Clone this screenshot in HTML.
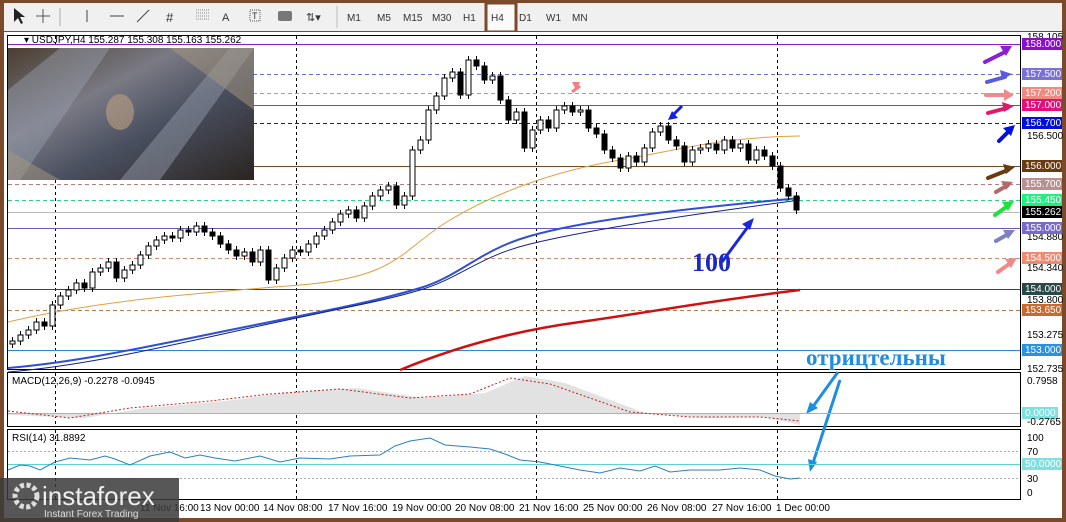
<!DOCTYPE html>
<html><head><meta charset="utf-8"><style>
html,body{margin:0;padding:0;width:1066px;height:522px;overflow:hidden;background:#7b4a2b;font-family:"Liberation Sans",sans-serif}
svg{display:block}
.w{fill:#fff;stroke:#000}.b{fill:#000;stroke:#000}
</style></head><body>
<svg width="1066" height="522" xmlns="http://www.w3.org/2000/svg" font-family="Liberation Sans, sans-serif">
<rect x="0" y="0" width="1066" height="522" fill="#7b4a2b"/>
<rect x="4" y="3" width="1058" height="28" fill="#f0f0f0"/>
<rect x="486" y="3" width="30" height="29" fill="#fafafa" stroke="#7b4a2b" stroke-width="3"/>
<g font-size="10" fill="#333">
<path d="M14 8l0 14 4-4 3 6 2-1-3-6 5 0z" fill="#222"/>
<path d="M43 9v14M36 16h14" stroke="#555"/>
<path d="M60 8v18" stroke="#aaa"/>
<path d="M87 10v12" stroke="#444"/>
<path d="M110 16h14" stroke="#444"/>
<path d="M137 22l12-12" stroke="#444"/>
<text x="166" y="22" font-size="13">#</text>
<path d="M196 10h14M196 13h14M196 16h14M196 19h14" stroke="#888" stroke-dasharray="1 1"/>
<text x="222" y="21" font-size="11">A</text>
<rect x="250" y="10" width="10" height="11" fill="none" stroke="#555" stroke-dasharray="1 1"/><text x="252" y="19" font-size="9">T</text>
<rect x="278" y="11" width="14" height="10" rx="2" fill="#777"/>
<text x="306" y="21" font-size="11">⇅▾</text>
<path d="M337 6v22" stroke="#bbb"/>
<text x="347" y="21">M1</text><text x="377" y="21">M5</text><text x="403" y="21">M15</text><text x="432" y="21">M30</text><text x="463" y="21">H1</text><text x="491" y="21">H4</text><text x="519" y="21">D1</text><text x="546" y="21">W1</text><text x="572" y="21">MN</text>
</g>
<rect x="4" y="32" width="1058" height="486" fill="#fff"/>
<rect x="7.5" y="35.5" width="1013" height="334" fill="none" stroke="#000"/>
<rect x="7.5" y="372.5" width="1013" height="54" fill="none" stroke="#000"/>
<rect x="7.5" y="429.5" width="1013" height="70" fill="none" stroke="#000"/>
<g stroke="#000" stroke-dasharray="3 3">
<path d="M55.5 36v334M296.5 36v334M536.5 36v334M777.5 36v334M55.5 373v54M296.5 373v54M536.5 373v54M777.5 373v54M55.5 430v70M296.5 430v70M536.5 430v70M777.5 430v70"/>
</g>
<g stroke-width="1">
<path d="M8 44.5h1012" stroke="#8b1fc0"/>
<path d="M8 74.5h1012" stroke="#6a6ae0" stroke-dasharray="4 3"/>
<path d="M8 93.5h1012" stroke="#e08a7a" stroke-dasharray="4 3"/>
<path d="M8 105.5h1012" stroke="#d0208a"/>
<path d="M8 123.5h1012" stroke="#102080" stroke-dasharray="4 3"/>
<path d="M8 166.5h1012" stroke="#7a4a20"/>
<path d="M8 184.5h1012" stroke="#b08080" stroke-dasharray="4 3"/>
<path d="M8 200.5h1012" stroke="#30d080" stroke-dasharray="4 3"/>
<path d="M8 212.5h1012" stroke="#bbb"/>
<path d="M8 228.5h1012" stroke="#6a5ab0"/>
<path d="M8 258.5h1012" stroke="#d08a70" stroke-dasharray="4 3"/>
<path d="M8 289.5h1012" stroke="#2a4a4a"/>
<path d="M8 310.5h1012" stroke="#c07a50" stroke-dasharray="4 3"/>
<path d="M8 350.5h1012" stroke="#2a8ad0"/>
</g>
<path d="M8 322 C100 300,200 293,300 285 S400 250,450 220 S560 170,620 160 S720 137,800 136" fill="none" stroke="#e0a040" stroke-width="1"/>
<path d="M8 368 C80 362,150 346,250 326 S380 300,420 288 S480 250,530 236 S650 212,800 198" fill="none" stroke="#3050d0" stroke-width="2"/>
<path d="M8 372 C80 366,150 350,250 328 S380 302,420 290 S480 256,530 244 S650 220,800 200" fill="none" stroke="#102090" stroke-width="1"/>
<path d="M400 370 C460 345,520 330,580 322 S700 302,800 290" fill="none" stroke="#d01010" stroke-width="2.5"/>
<!-- candles -->
<path stroke="#000" d="M12.5 337v11M20.5 331v14M28.5 326v13M36.5 318v16M44.5 318v12M52.5 301v29M60.5 292v17M68.5 286v14M76.5 279v15M84.5 279v13M92.5 268v24M100.5 264v12M108.5 258v14M116.5 258v24M124.5 266v16M132.5 261v13M140.5 251v18M148.5 242v17M156.5 236v14M164.5 232v12M172.5 232v10M180.5 226v16M188.5 226v10M196.5 222v14M204.5 222v14M212.5 228v12M220.5 232v16M228.5 240v14M236.5 246v14M244.5 248v12M252.5 248v18M260.5 246v20M268.5 246v38M276.5 264v20M284.5 254v18M292.5 246v16M300.5 246v10M308.5 240v16M316.5 232v16M324.5 226v14M332.5 218v16M340.5 210v16M348.5 206v12M356.5 206v16M364.5 202v20M372.5 192v18M380.5 186v14M388.5 182v12M396.5 182v27M404.5 192v17M412.5 146v54M420.5 136v18M428.5 106v38M436.5 92v22M444.5 74v26M452.5 68v14M460.5 68v31M468.5 56v43M476.5 56v14M484.5 62v22M492.5 72v12M500.5 72v32M508.5 96v28M516.5 108v16M524.5 108v44M532.5 126v26M540.5 116v18M548.5 116v16M556.5 106v26M564.5 102v12M572.5 102v14M580.5 106v10M588.5 106v26M596.5 124v14M604.5 130v24M612.5 146v16M620.5 154v18M628.5 152v20M636.5 152v14M644.5 144v22M652.5 128v24M660.5 122v14M668.5 122v22M676.5 136v14M684.5 142v24M692.5 146v20M700.5 144v10M708.5 140v12M716.5 140v14M724.5 136v18M732.5 136v16M740.5 140v12M748.5 140v24M756.5 146v18M764.5 146v14M772.5 152v18M780.5 162v30M788.5 184v16M796.5 192v22"/>
<g shape-rendering="crispEdges">
<rect class="w" x="10" y="341" width="5" height="3"/><rect class="w" x="18" y="335" width="5" height="6"/><rect class="w" x="26" y="330" width="5" height="5"/><rect class="w" x="34" y="322" width="5" height="8"/><rect class="b" x="42" y="322" width="5" height="4"/><rect class="w" x="50" y="305" width="5" height="21"/><rect class="w" x="58" y="296" width="5" height="9"/><rect class="w" x="66" y="290" width="5" height="6"/><rect class="w" x="74" y="283" width="5" height="7"/><rect class="b" x="82" y="283" width="5" height="5"/><rect class="w" x="90" y="272" width="5" height="16"/><rect class="w" x="98" y="268" width="5" height="4"/><rect class="w" x="106" y="262" width="5" height="6"/><rect class="b" x="114" y="262" width="5" height="16"/><rect class="w" x="122" y="270" width="5" height="8"/><rect class="w" x="130" y="265" width="5" height="5"/><rect class="w" x="138" y="255" width="5" height="10"/><rect class="w" x="146" y="246" width="5" height="9"/><rect class="w" x="154" y="240" width="5" height="6"/><rect class="w" x="162" y="236" width="5" height="4"/><rect class="b" x="170" y="236" width="5" height="2"/><rect class="w" x="178" y="230" width="5" height="8"/><rect class="b" x="186" y="230" width="5" height="2"/><rect class="w" x="194" y="226" width="5" height="6"/><rect class="b" x="202" y="226" width="5" height="6"/><rect class="b" x="210" y="232" width="5" height="4"/><rect class="b" x="218" y="236" width="5" height="8"/><rect class="b" x="226" y="244" width="5" height="6"/><rect class="b" x="234" y="250" width="5" height="6"/><rect class="w" x="242" y="252" width="5" height="4"/><rect class="b" x="250" y="252" width="5" height="10"/><rect class="w" x="258" y="250" width="5" height="12"/><rect class="b" x="266" y="250" width="5" height="30"/><rect class="w" x="274" y="268" width="5" height="12"/><rect class="w" x="282" y="258" width="5" height="10"/><rect class="w" x="290" y="250" width="5" height="8"/><rect class="b" x="298" y="250" width="5" height="2"/><rect class="w" x="306" y="244" width="5" height="8"/><rect class="w" x="314" y="236" width="5" height="8"/><rect class="w" x="322" y="230" width="5" height="6"/><rect class="w" x="330" y="222" width="5" height="8"/><rect class="w" x="338" y="214" width="5" height="8"/><rect class="w" x="346" y="210" width="5" height="4"/><rect class="b" x="354" y="210" width="5" height="8"/><rect class="w" x="362" y="206" width="5" height="12"/><rect class="w" x="370" y="196" width="5" height="10"/><rect class="w" x="378" y="190" width="5" height="6"/><rect class="w" x="386" y="186" width="5" height="4"/><rect class="b" x="394" y="186" width="5" height="19"/><rect class="w" x="402" y="196" width="5" height="9"/><rect class="w" x="410" y="150" width="5" height="46"/><rect class="w" x="418" y="140" width="5" height="10"/><rect class="w" x="426" y="110" width="5" height="30"/><rect class="w" x="434" y="96" width="5" height="14"/><rect class="w" x="442" y="78" width="5" height="18"/><rect class="w" x="450" y="72" width="5" height="6"/><rect class="b" x="458" y="72" width="5" height="23"/><rect class="w" x="466" y="60" width="5" height="35"/><rect class="b" x="474" y="60" width="5" height="6"/><rect class="b" x="482" y="66" width="5" height="14"/><rect class="w" x="490" y="76" width="5" height="4"/><rect class="b" x="498" y="76" width="5" height="24"/><rect class="b" x="506" y="100" width="5" height="20"/><rect class="w" x="514" y="112" width="5" height="8"/><rect class="b" x="522" y="112" width="5" height="36"/><rect class="w" x="530" y="130" width="5" height="18"/><rect class="w" x="538" y="120" width="5" height="10"/><rect class="b" x="546" y="120" width="5" height="8"/><rect class="w" x="554" y="110" width="5" height="18"/><rect class="w" x="562" y="106" width="5" height="4"/><rect class="b" x="570" y="106" width="5" height="6"/><rect class="w" x="578" y="110" width="5" height="2"/><rect class="b" x="586" y="110" width="5" height="18"/><rect class="b" x="594" y="128" width="5" height="6"/><rect class="b" x="602" y="134" width="5" height="16"/><rect class="b" x="610" y="150" width="5" height="8"/><rect class="b" x="618" y="158" width="5" height="10"/><rect class="w" x="626" y="156" width="5" height="12"/><rect class="b" x="634" y="156" width="5" height="6"/><rect class="w" x="642" y="148" width="5" height="14"/><rect class="w" x="650" y="132" width="5" height="16"/><rect class="w" x="658" y="126" width="5" height="6"/><rect class="b" x="666" y="126" width="5" height="14"/><rect class="b" x="674" y="140" width="5" height="6"/><rect class="b" x="682" y="146" width="5" height="16"/><rect class="w" x="690" y="150" width="5" height="12"/><rect class="w" x="698" y="148" width="5" height="2"/><rect class="w" x="706" y="144" width="5" height="4"/><rect class="b" x="714" y="144" width="5" height="6"/><rect class="w" x="722" y="140" width="5" height="10"/><rect class="b" x="730" y="140" width="5" height="8"/><rect class="w" x="738" y="144" width="5" height="4"/><rect class="b" x="746" y="144" width="5" height="16"/><rect class="w" x="754" y="150" width="5" height="10"/><rect class="b" x="762" y="150" width="5" height="6"/><rect class="b" x="770" y="156" width="5" height="10"/><rect class="b" x="778" y="166" width="5" height="22"/><rect class="b" x="786" y="188" width="5" height="8"/><rect class="b" x="794" y="196" width="5" height="14"/>
</g>
<defs><linearGradient id="g1" x1="0" y1="0" x2="1" y2="1"><stop offset="0" stop-color="#4a3e32"/><stop offset=".35" stop-color="#7a7a84"/><stop offset=".6" stop-color="#4a5060"/><stop offset="1" stop-color="#2a2420"/></linearGradient></defs>
<rect x="8" y="48" width="246" height="132" fill="url(#g1)"/>
<path d="M8 90L60 48H110L20 180H8zM120 180L230 48h24L160 180z" fill="#9aa0b0" opacity=".45"/>
<path d="M170 48L254 110V48z M8 150L60 180H8z" fill="#a89880" opacity=".5"/>
<ellipse cx="120" cy="112" rx="14" ry="18" fill="#b09880" opacity=".7"/>
<text x="24" y="43" font-size="10" fill="#000">▾ USDJPY,H4  155.287 155.308 155.163 155.262</text>
<text x="692" y="271" font-family="Liberation Serif,serif" font-weight="bold" font-size="26" fill="#1a28c8">100</text>
<path d="M722 262L750 224" stroke="#1a28d8" stroke-width="3"/><path d="M754 218l-12 6 8 6z" fill="#1a28d8"/>
<text x="806" y="365" font-family="Liberation Serif,Noto Serif CJK SC,serif" font-weight="bold" font-size="23" fill="#1e8ee0">отрицтельны</text>
<path d="M838 372L812 408M840 380L812 466" stroke="#1e8ee0" stroke-width="3"/>
<path d="M806 414l4-12 8 6zM810 472l-2-13 9 3z" fill="#1e8ee0"/>
<g stroke-width="3">
<path d="M572 92l8-6" stroke="#f08080"/><path d="M580 82l-8 0 4 8z" fill="#f08080"/>
<path d="M682 106l-10 10" stroke="#1020e0"/><path d="M668 120l10-2-6-7z" fill="#1020e0"/>
</g>
<g stroke-width="4" stroke-linecap="round">
<path d="M985 62L1005 52" stroke="#8a20d0"/><path d="M1012 46l-12 0 6 10z" fill="#8a20d0"/>
<path d="M987 82L1005 77" stroke="#5a5ae0"/><path d="M1012 74l-12-4 2 10z" fill="#5a5ae0"/>
<path d="M986 95L1007 95" stroke="#f08a8a"/><path d="M1014 95l-10-6v12z" fill="#f08a8a"/>
<path d="M988 113L1007 108" stroke="#e01a6a"/><path d="M1014 106l-12-4 2 10z" fill="#e01a6a"/>
<path d="M999 141L1010 130" stroke="#0010e0"/><path d="M1015 125l-12 3 8 8z" fill="#0010e0"/>
<path d="M988 178L1008 170" stroke="#6a3a10"/><path d="M1015 167l-12-3 3 10z" fill="#6a3a10"/>
<path d="M996 192L1008 185" stroke="#b06a6a"/><path d="M1013 182l-12-1 5 9z" fill="#b06a6a"/>
<path d="M995 215L1009 205" stroke="#20e040"/><path d="M1014 201l-12 1 6 9z" fill="#20e040"/>
<path d="M996 241L1010 233" stroke="#8080c0"/><path d="M1015 230l-12 0 5 9z" fill="#8080c0"/>
<path d="M998 272L1012 262" stroke="#f08888"/><path d="M1017 258l-12 1 6 9z" fill="#f08888"/>
</g>
<g font-size="10" fill="#000">
<text x="1027" y="40">158.105</text>
<text x="1027" y="139">156.500</text>
<text x="1027" y="240">154.880</text>
<text x="1027" y="271">154.340</text>
<text x="1027" y="303">153.800</text>
<text x="1027" y="338">153.275</text>
<text x="1027" y="372">152.735</text>
</g>
<g font-size="10" fill="#fff">
<rect x="1022" y="38" width="40" height="12" fill="#8a10c8"/><text x="1025" y="47">158.000</text>
<rect x="1022" y="68" width="40" height="12" fill="#7a70d8"/><text x="1025" y="77">157.500</text>
<rect x="1022" y="87" width="40" height="12" fill="#f08a80"/><text x="1025" y="96">157.200</text>
<rect x="1022" y="99" width="40" height="12" fill="#e0107a"/><text x="1025" y="108">157.000</text>
<rect x="1022" y="117" width="40" height="12" fill="#0010d8"/><text x="1025" y="126">156.700</text>
<rect x="1022" y="160" width="40" height="12" fill="#6a3a10"/><text x="1025" y="169">156.000</text>
<rect x="1022" y="178" width="40" height="12" fill="#b89090"/><text x="1025" y="187">155.700</text>
<rect x="1022" y="194" width="40" height="12" fill="#20f080"/><text x="1025" y="203">155.450</text>
<rect x="1022" y="206" width="40" height="12" fill="#000"/><text x="1025" y="215">155.262</text>
<rect x="1022" y="222" width="40" height="12" fill="#7a6ac8"/><text x="1025" y="231">155.000</text>
<rect x="1022" y="252" width="40" height="12" fill="#f08a70"/><text x="1025" y="261">154.500</text>
<rect x="1022" y="283" width="40" height="12" fill="#2a4848"/><text x="1025" y="292">154.000</text>
<rect x="1022" y="304" width="40" height="12" fill="#c86a30"/><text x="1025" y="313">153.650</text>
<rect x="1022" y="344" width="40" height="12" fill="#2a90e0"/><text x="1025" y="353">153.000</text>
</g>
<!-- MACD -->
<path d="M8 413L8 415L85 418L145 408L225 401L285 393L355 388L425 398L485 393L525 376L565 383L605 398L645 413L705 418L765 417L800 425L800 413Z" fill="#e2e2e2"/>
<path d="M8 413.5h1012" stroke="#60d0d0"/>
<path d="M8 411L70 418L130 408L210 401L270 394L340 389L410 398L470 394L510 378L550 384L590 398L630 412L690 417L760 417L800 421" fill="none" stroke="#c02020" stroke-dasharray="2 2"/>
<text x="12" y="384" font-size="10">MACD(12,26,9) -0.2278 -0.0945</text>
<text x="1027" y="384" font-size="10">0.7958</text>
<rect x="1022" y="407" width="36" height="12" fill="#80e0e0"/><text x="1025" y="416" font-size="10" fill="#fff">0.0000</text>
<text x="1027" y="425" font-size="10">-0.2765</text>
<!-- RSI -->
<path d="M8 451.5h1012M8 478.5h1012" stroke="#aaa" stroke-dasharray="2 2"/>
<path d="M8 464.5h1012" stroke="#60d0d0"/>
<polyline fill="none" stroke="#2a80c0" points="8,470 20,465 30,466 40,470 55,462 70,458 90,460 105,456 115,459 130,465 150,456 170,452 185,458 200,455 215,458 235,461 260,456 280,462 300,458 330,459 350,456 380,455 395,446 410,441 430,438 445,445 470,447 490,449 505,454 520,460 540,462 560,466 580,470 600,473 620,468 640,471 655,466 670,472 690,470 720,470 740,468 760,470 775,476 790,479 800,478"/>
<text x="12" y="441" font-size="10">RSI(14) 31.8892</text>
<g font-size="10"><text x="1027" y="441">100</text><text x="1027" y="455">70</text><text x="1027" y="482">30</text><text x="1027" y="496">0</text></g>
<rect x="1022" y="458" width="40" height="12" fill="#80e0e0"/><text x="1025" y="467" font-size="10" fill="#fff">50.0000</text>
<g font-size="10" fill="#000">
<text x="140" y="511">11 Nov 16:00</text><text x="200" y="511">13 Nov 00:00</text><text x="263" y="511">14 Nov 08:00</text><text x="328" y="511">17 Nov 16:00</text><text x="392" y="511">19 Nov 00:00</text><text x="455" y="511">20 Nov 08:00</text><text x="519" y="511">21 Nov 16:00</text><text x="583" y="511">25 Nov 00:00</text><text x="647" y="511">26 Nov 08:00</text><text x="712" y="511">27 Nov 16:00</text><text x="776" y="511">1 Dec 00:00</text>
</g>
<rect x="0" y="478" width="179" height="44" fill="#3a3a3a" opacity=".85"/>
<circle cx="26" cy="496" r="11" fill="none" stroke="#ddd" stroke-width="5" stroke-dasharray="4 2.5"/>
<text x="42" y="505" font-size="26" fill="#eee">instaforex</text>
<text x="44" y="517" font-size="10" fill="#ddd">Instant Forex Trading</text>
</svg>
</body></html>
